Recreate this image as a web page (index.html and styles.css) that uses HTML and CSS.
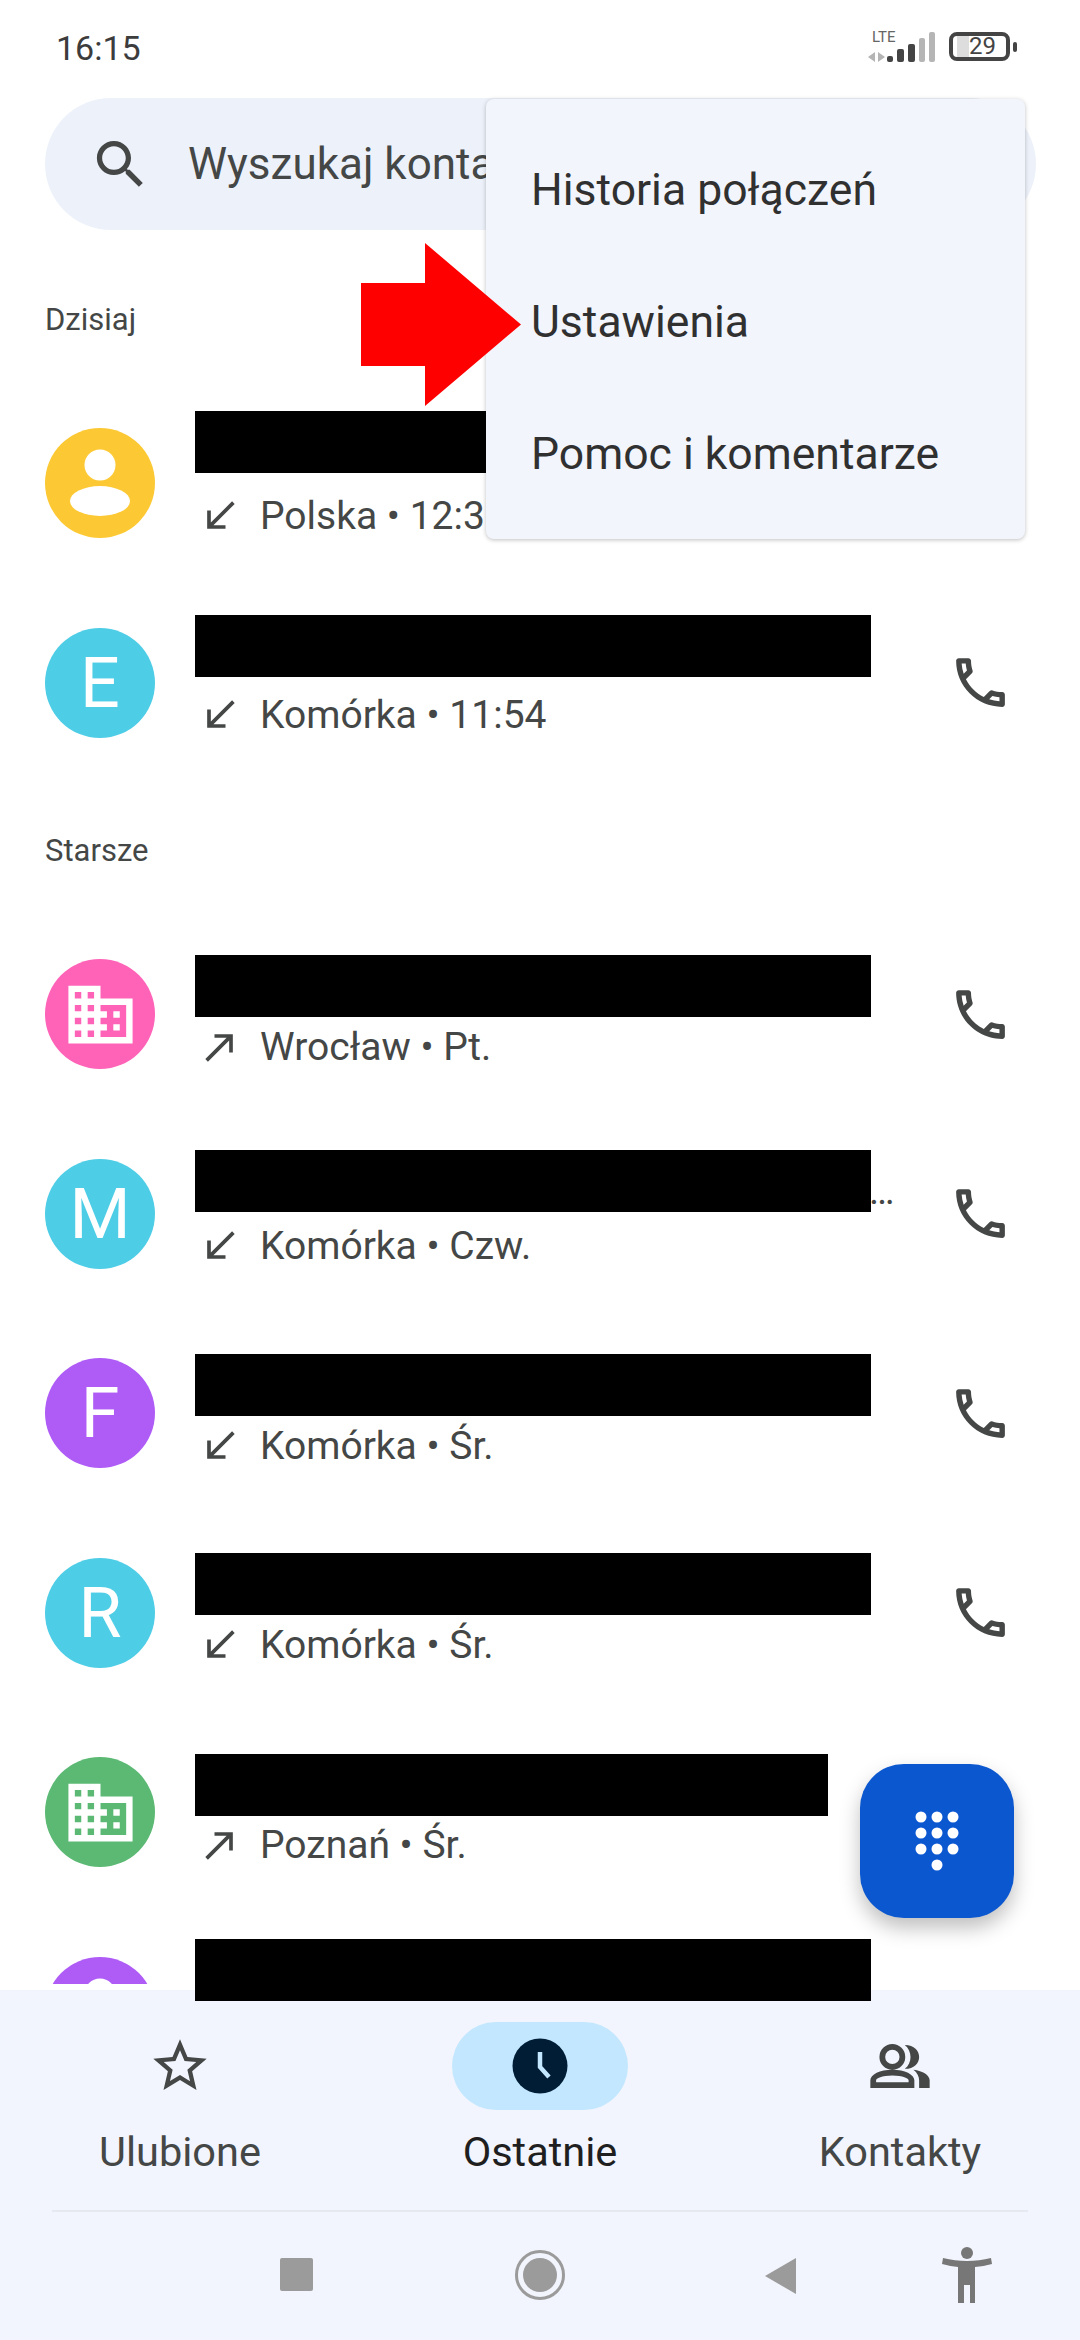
FILE: index.html
```html
<!DOCTYPE html>
<html lang="pl">
<head>
  <meta charset="UTF-8">
  <meta name="viewport" content="width=device-width, initial-scale=1.0">
  <title>Ostatnie</title>
  <link rel="stylesheet" href="styles.css">
</head>
<body>
  <svg class="sprites" width="0" height="0">
    <symbol id="i-call" viewBox="0 0 24 24"><path d="M6.54 5c.06.89.21 1.76.45 2.59l-1.2 1.2c-.41-1.2-.67-2.47-.76-3.79h1.51m9.86 12.02c.85.24 1.72.39 2.6.45v1.49c-1.32-.09-2.59-.35-3.8-.75l1.2-1.19M7.5 3H4c-.55 0-1 .45-1 1 0 9.39 7.61 17 17 17 .55 0 1-.45 1-1v-3.49c0-.55-.45-1-1-1-1.24 0-2.45-.2-3.57-.57-.1-.04-.21-.05-.31-.05-.26 0-.51.1-.71.29l-2.2 2.2c-2.83-1.45-5.15-3.76-6.59-6.59l2.2-2.2c.28-.28.36-.67.25-1.02C8.7 6.45 8.5 5.25 8.5 4c0-.55-.45-1-1-1z"/></symbol>
    <symbol id="i-in" viewBox="0 0 24 24"><path d="M20 5.41L18.59 4 7 15.59V9H5v10h10v-2H8.41z"/></symbol>
    <symbol id="i-out" viewBox="0 0 24 24"><path d="M9 5v2h6.59L4 18.59 5.41 20 17 8.41V15h2V5z"/></symbol>
    <symbol id="i-domain" viewBox="0 0 24 24"><path d="M12 7V3H2v18h20V7H12zM6 19H4v-2h2v2zm0-4H4v-2h2v2zm0-4H4V9h2v2zm0-4H4V5h2v2zm4 12H8v-2h2v2zm0-4H8v-2h2v2zm0-4H8V9h2v2zm0-4H8V5h2v2zm10 12h-8v-2h2v-2h-2v-2h2v-2h-2V9h8v10zm-2-8h-2v2h2v-2zm0 4h-2v2h2v-2z"/></symbol>
    <symbol id="i-person" viewBox="0 0 110 110"><circle cx="55" cy="37" r="15.5"/><ellipse cx="55" cy="73" rx="30" ry="15"/></symbol>
  </svg>

  <div class="status-bar">
    <span class="clock">16:15</span>
    <div class="status-icons">
      <div class="signal">
        <span class="lte">LTE</span>
        <svg width="68" height="31" viewBox="0 0 68 31">
          <path class="sig-light" d="M7 21v10l-7-5zM10 21l7 5-7 5z"/>
          <rect class="sig-dark" x="19" y="25" width="6" height="6" rx="2"/>
          <rect class="sig-dark" x="29" y="18" width="7" height="13" rx="2"/>
          <rect class="sig-dark" x="40" y="13" width="7" height="18" rx="2"/>
          <rect class="sig-light" x="51" y="7" width="6" height="24" rx="2"/>
          <rect class="sig-light" x="61" y="1" width="6" height="30" rx="2"/>
        </svg>
      </div>
      <div class="battery">
        <div class="battery-level"></div>
        <span class="battery-text">29</span>
      </div>
      <div class="battery-tip"></div>
    </div>
  </div>

  <div class="search">
    <svg class="search-icon" viewBox="0 0 24 24"><path d="M15.5 14h-.79l-.28-.27C15.41 12.59 16 11.11 16 9.5 16 5.91 13.09 3 9.5 3S3 5.91 3 9.5 5.91 16 9.5 16c1.61 0 3.09-.59 4.23-1.57l.27.28v.79l5 4.99L20.49 19l-4.99-5zm-6 0C7.01 14 5 11.99 5 9.5S7.01 5 9.5 5 14 7.01 14 9.5 11.99 14 9.5 14z"/></svg>
    <span class="search-text">Wyszukaj kontakty</span>
  </div>

  <div class="list">
    <div class="section-title today">Dzisiaj</div>

    <div class="row">
      <div class="avatar yellow"><svg class="avatar-person"><use href="#i-person"/></svg></div>
      <div class="row-body">
        <div class="bar bar-up2"></div>
        <div class="sub"><svg class="dir"><use href="#i-in"/></svg>Polska • 12:37</div>
      </div>
    </div>
    <div class="row">
      <div class="avatar cyan">E</div>
      <div class="row-body">
        <div class="bar bar-up1"></div>
        <div class="sub"><svg class="dir"><use href="#i-in"/></svg>Komórka • 11:54</div>
      </div>
      <svg class="call"><use href="#i-call"/></svg>
    </div>

    <div class="section-title older">Starsze</div>

    <div class="row">
      <div class="avatar pink"><svg class="avatar-icon"><use href="#i-domain"/></svg></div>
      <div class="row-body">
        <div class="bar"></div>
        <div class="sub"><svg class="dir"><use href="#i-out"/></svg>Wrocław • Pt.</div>
      </div>
      <svg class="call"><use href="#i-call"/></svg>
    </div>
    <div class="row">
      <div class="avatar cyan">M</div>
      <div class="row-body">
        <div class="bar bar-up3"><span class="more">…</span></div>
        <div class="sub"><svg class="dir"><use href="#i-in"/></svg>Komórka • Czw.</div>
      </div>
      <svg class="call"><use href="#i-call"/></svg>
    </div>
    <div class="row">
      <div class="avatar purple">F</div>
      <div class="row-body">
        <div class="bar"></div>
        <div class="sub"><svg class="dir"><use href="#i-in"/></svg>Komórka • Śr.</div>
      </div>
      <svg class="call"><use href="#i-call"/></svg>
    </div>
    <div class="row">
      <div class="avatar cyan">R</div>
      <div class="row-body">
        <div class="bar"></div>
        <div class="sub"><svg class="dir"><use href="#i-in"/></svg>Komórka • Śr.</div>
      </div>
      <svg class="call"><use href="#i-call"/></svg>
    </div>
    <div class="row">
      <div class="avatar green"><svg class="avatar-icon"><use href="#i-domain"/></svg></div>
      <div class="row-body">
        <div class="bar bar-short"></div>
        <div class="sub"><svg class="dir"><use href="#i-out"/></svg>Poznań • Śr.</div>
      </div>
    </div>
    <div class="row">
      <div class="avatar purple"><svg class="avatar-person"><use href="#i-person"/></svg></div>
      <div class="row-body">
        <div class="bar bar-up2"></div>
      </div>
    </div>
  </div>

  <div class="bottom">
    <div class="tabs">
      <div class="tab">
        <div class="tab-icon">
          <svg width="64" height="64" viewBox="0 0 24 24"><path d="M22 9.24l-7.19-.62L12 2 9.19 8.63 2 9.24l5.46 4.73L5.82 21 12 17.27 18.18 21l-1.63-7.03L22 9.24zM12 15.4l-3.76 2.27 1-4.28-3.32-2.88 4.38-.38L12 6.1l1.71 4.04 4.38.38-3.32 2.88 1 4.28L12 15.4z"/></svg>
        </div>
        <span>Ulubione</span>
      </div>
      <div class="tab active">
        <div class="tab-icon pill">
          <svg width="56" height="56" viewBox="0 0 56 56"><circle cx="28" cy="28" r="27.5" fill="#001d35"/><path d="M28 14v15l9 10" fill="none" stroke="#c2e7ff" stroke-width="4.5"/></svg>
        </div>
        <span>Ostatnie</span>
      </div>
      <div class="tab">
        <div class="tab-icon">
          <svg width="62" height="44" viewBox="0 0 62 46"><path fill-rule="evenodd" d="M23 0a13.500 13.500 0 1 1 0 27 13.500 13.500 0 0 1 0-27zm0 6a7.500 7.500 0 1 0 0 15 7.500 7.500 0 0 0 0-15zM0 46v-8c0-6 10-11 23-11s23 5 23 11v8zm6-6h34v-2c0-2-6-5-17-5S6 36 6 38z"/><path d="M36 1c10 0 15 6 15 12.500S46 26 36 26c4-3 6-8 6-12.500S40 4 36 1zM45 27c10 1 17 6 17 11v8H51v-8c0-4-2-8-6-11z"/></svg>
        </div>
        <span>Kontakty</span>
      </div>
    </div>
    <div class="divider"></div>
    <div class="sysnav">
      <div class="sys-square"></div>
      <div class="sys-home"><div class="sys-home-dot"></div></div>
      <svg class="sys-back" width="34" height="38" viewBox="0 0 34 38"><path d="M32 1L1 19l31 18z"/></svg>
      <svg class="sys-a11y" width="50" height="56" viewBox="0 0 50 56"><circle cx="25" cy="6" r="6"/><path d="M1 11C9 13 17 14 25 14S41 13 49 11L50 17C44 18.500 39 19.500 33 20V56H28V38H22V56H16V20C11 19.500 6 18.500 0 17Z"/></svg>
    </div>
  </div>

  <div class="menu">
    <div class="menu-item">Historia połączeń</div>
    <div class="menu-item">Ustawienia</div>
    <div class="menu-item">Pomoc i komentarze</div>
  </div>

  <svg class="red-arrow" width="160" height="163" viewBox="0 0 160 163"><path d="M0 40h64V0l96 81.500-96 81.500v-40H0z"/></svg>

  <div class="fab">
    <svg width="50" height="60" viewBox="0 0 50 60">
      <circle cx="9" cy="6" r="5.500"/><circle cx="25" cy="6" r="5.500"/><circle cx="41" cy="6" r="5.500"/>
      <circle cx="9" cy="22" r="5.500"/><circle cx="25" cy="22" r="5.500"/><circle cx="41" cy="22" r="5.500"/>
      <circle cx="9" cy="38" r="5.500"/><circle cx="25" cy="38" r="5.500"/><circle cx="41" cy="38" r="5.500"/>
      <circle cx="25" cy="54" r="5.500"/>
    </svg>
  </div>
</body>
</html>
```
FILE: styles.css
```css
* {
  box-sizing: border-box;
}

body {
  margin: 0;
  width: 1080px;
  height: 2340px;
  overflow: hidden;
  position: relative;
  display: flex;
  flex-direction: column;
  background-color: #fff;
  color: #444746;
  font-family: Roboto, "Noto Sans", sans-serif;
}

.sprites {
  position: absolute;
}

/* status bar */
.status-bar {
  height: 98px;
  flex: none;
  display: flex;
  justify-content: space-between;
  align-items: flex-start;
  padding: 27px 63px 0 56px;
}

.clock {
  font-size: 34px;
  line-height: 42px;
  color: #3c3c3c;
}

.status-icons {
  display: flex;
  align-items: flex-start;
  margin-top: 4px;
}

.signal {
  position: relative;
  width: 68px;
  height: 31px;
  margin-right: 13px;
}

.signal svg {
  display: block;
}

.lte {
  position: absolute;
  left: 4px;
  top: -2px;
  font-size: 15px;
  line-height: 16px;
  color: #666;
}

.sig-dark {
  fill: #444;
}

.sig-light {
  fill: #b5b5b5;
}

.battery {
  position: relative;
  width: 61px;
  height: 29px;
  border: 4px solid #444;
  border-radius: 8px;
  margin-top: 1px;
}

.battery-level {
  width: 12px;
  height: 100%;
  margin-left: 4px;
  background-color: #ddd;
}

.battery-text {
  position: absolute;
  left: 6px;
  right: 0;
  top: -4px;
  text-align: center;
  font-size: 24px;
  line-height: 28px;
  color: #444;
}

.battery-tip {
  width: 4px;
  height: 10px;
  margin: 11px 0 0 3px;
  border-radius: 2px;
  background-color: #444;
}

/* search */
.search {
  height: 132px;
  flex: none;
  margin: 0 44px 0 45px;
  padding-left: 44px;
  display: flex;
  align-items: center;
  background-color: #edf2fa;
  border-radius: 66px;
}

.search-icon {
  width: 63px;
  height: 63px;
  margin-right: 36px;
  fill: #444746;
}

.search-text {
  font-size: 44px;
}

/* call list */
.list {
  flex: 1;
  min-height: 0;
}

.section-title {
  padding-left: 45px;
  font-size: 31px;
  line-height: 36px;
  color: #444746;
}

.today {
  height: 153.5px;
  padding-top: 72px;
}

.older {
  height: 132px;
  padding-top: 50px;
}

.row {
  height: 199.5px;
  padding: 0 67px 0 45px;
  display: flex;
  align-items: center;
}

.avatar {
  width: 110px;
  height: 110px;
  flex: none;
  border-radius: 50%;
  display: flex;
  align-items: center;
  justify-content: center;
  color: #fff;
  fill: #fff;
  font-size: 70px;
}

.yellow { background-color: #fcc934; }
.cyan { background-color: #4ecde6; }
.pink { background-color: #ff63b8; }
.purple { background-color: #af5cf7; }
.green { background-color: #5bb974; }

.avatar-icon {
  width: 77px;
  height: 77px;
}

.avatar-person {
  width: 110px;
  height: 110px;
}

.row-body {
  flex: 1;
  align-self: stretch;
  margin-left: 40px;
  display: flex;
  flex-direction: column;
  padding-top: 40px;
  position: relative;
}

/* black boxes drawn over the names */
.bar {
  position: relative;
  z-index: 2;
  width: 676px;
  height: 62px;
  flex: none;
  background-color: #000;
}

.bar-up1 { margin-top: -8px; }
.bar-up2 { margin-top: -13px; }
.bar-up3 { margin-top: -4px; }

.bar-short {
  width: 633px;
  margin-top: 1px;
}

.more {
  position: absolute;
  left: 674px;
  bottom: 4px;
  font-size: 38px;
  line-height: 34px;
  color: #444746;
}

.sub {
  position: absolute;
  left: 0;
  top: 110px;
  display: flex;
  align-items: center;
  font-size: 39px;
  line-height: 44px;
  white-space: nowrap;
}

.dir {
  width: 44px;
  height: 44px;
  margin: 0 18px 0 3px;
  fill: #444746;
}

.call {
  width: 65px;
  height: 65px;
  flex: none;
  fill: #444746;
}

/* bottom bar */
.bottom {
  position: relative;
  z-index: 1;
  height: 350px;
  flex: none;
  background-color: #f2f5fd;
  box-shadow: 0 -6px 0 #fff;
}

.tabs {
  height: 220px;
  padding-top: 32px;
  display: flex;
}

.tab {
  flex: 1;
  display: flex;
  flex-direction: column;
  align-items: center;
  font-size: 41.500px;
  line-height: 46px;
  color: #444746;
}

.tab.active {
  color: #1f1f1f;
}

.tab-icon {
  width: 176px;
  height: 88px;
  margin-bottom: 19px;
  border-radius: 44px;
  display: flex;
  align-items: center;
  justify-content: center;
  fill: #444746;
}

.pill {
  background-color: #c2e7ff;
}

.divider {
  height: 2px;
  margin: 0 52px;
  background-color: #e6e9ef;
}

.sysnav {
  height: 128px;
  position: relative;
}

.sys-square {
  position: absolute;
  left: 280px;
  top: 46px;
  width: 33px;
  height: 33px;
  border-radius: 2px;
  background-color: #9b9b9b;
}

.sys-home {
  position: absolute;
  left: 515px;
  top: 38px;
  width: 50px;
  height: 50px;
  padding: 5px;
  border: 3px solid #9b9b9b;
  border-radius: 50%;
}

.sys-home-dot {
  width: 100%;
  height: 100%;
  border-radius: 50%;
  background-color: #9b9b9b;
}

.sys-back {
  position: absolute;
  left: 764px;
  top: 45px;
  fill: #9b9b9b;
}

.sys-a11y {
  position: absolute;
  left: 942px;
  top: 35px;
  fill: #777;
}

/* popup menu */
.menu {
  position: absolute;
  z-index: 3;
  left: 486px;
  top: 99px;
  width: 539px;
  height: 440px;
  padding: 25px 0;
  background-color: #f2f5fc;
  border-radius: 8px;
  box-shadow: 0 1px 4px rgba(0, 0, 0, 0.25);
}

.menu-item {
  height: 132px;
  padding-left: 45px;
  display: flex;
  align-items: center;
  font-size: 44.500px;
  color: #303030;
}

.red-arrow {
  position: absolute;
  z-index: 4;
  left: 361px;
  top: 243px;
  fill: #ff0000;
}

.fab {
  position: absolute;
  z-index: 2;
  left: 860px;
  top: 1764px;
  width: 154px;
  height: 154px;
  border-radius: 44px;
  background-color: #0b57d0;
  fill: #fff;
  display: flex;
  align-items: center;
  justify-content: center;
  box-shadow: 0 10px 20px rgba(0, 0, 0, 0.25);
}
```
